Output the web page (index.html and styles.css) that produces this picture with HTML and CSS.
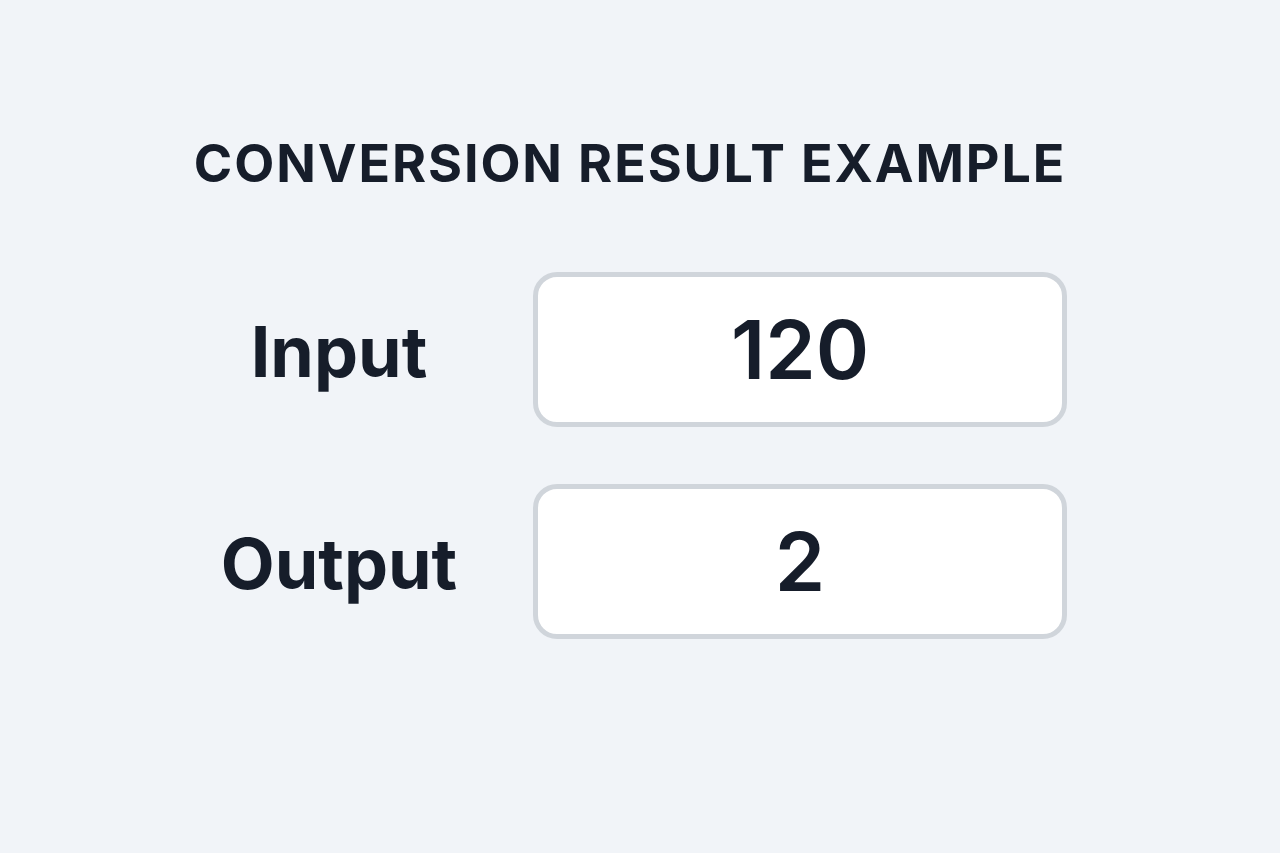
FILE: index.html
```html
<!DOCTYPE html>
<html lang="en">
<head>
<meta charset="utf-8">
<title>Conversion Result Example</title>
<link rel="stylesheet" href="styles.css">
</head>
<body>
<main class="card">
  <h1 class="title">CONVERSION RESULT EXAMPLE</h1>
  <div class="rows">
    <div class="label">Input</div>
    <div class="box">120</div>
    <div class="label">Output</div>
    <div class="box">2</div>
  </div>
</main>
</body>
</html>
```
FILE: styles.css
```css
html, body {
  margin: 0;
  padding: 0;
}
body {
  width: 1280px;
  height: 853px;
  background: #f1f4f8;
  font-family: Inter, "Noto Sans", "Liberation Sans", sans-serif;
  color: #161d2a;
  overflow: hidden;
}
.card {
  width: 874px;
  margin-left: 193px;
  padding-top: 133px;
}
.title {
  margin: 0;
  text-align: center;
  font-size: 52px;
  font-weight: 700;
  line-height: 62px;
  letter-spacing: 1.9px;
}
.rows {
  margin-top: 77px;
  display: grid;
  grid-template-columns: 292px 534px;
  column-gap: 48px;
  row-gap: 57px;
  align-items: center;
}
.label {
  text-align: center;
  font-size: 70px;
  font-weight: 700;
  padding-top: 4px;
}
.box {
  box-sizing: border-box;
  height: 155px;
  border: 5px solid #d0d5db;
  border-radius: 24px;
  background: #ffffff;
  display: flex;
  align-items: center;
  justify-content: center;
  font-size: 81px;
  font-weight: 600;
}
```
